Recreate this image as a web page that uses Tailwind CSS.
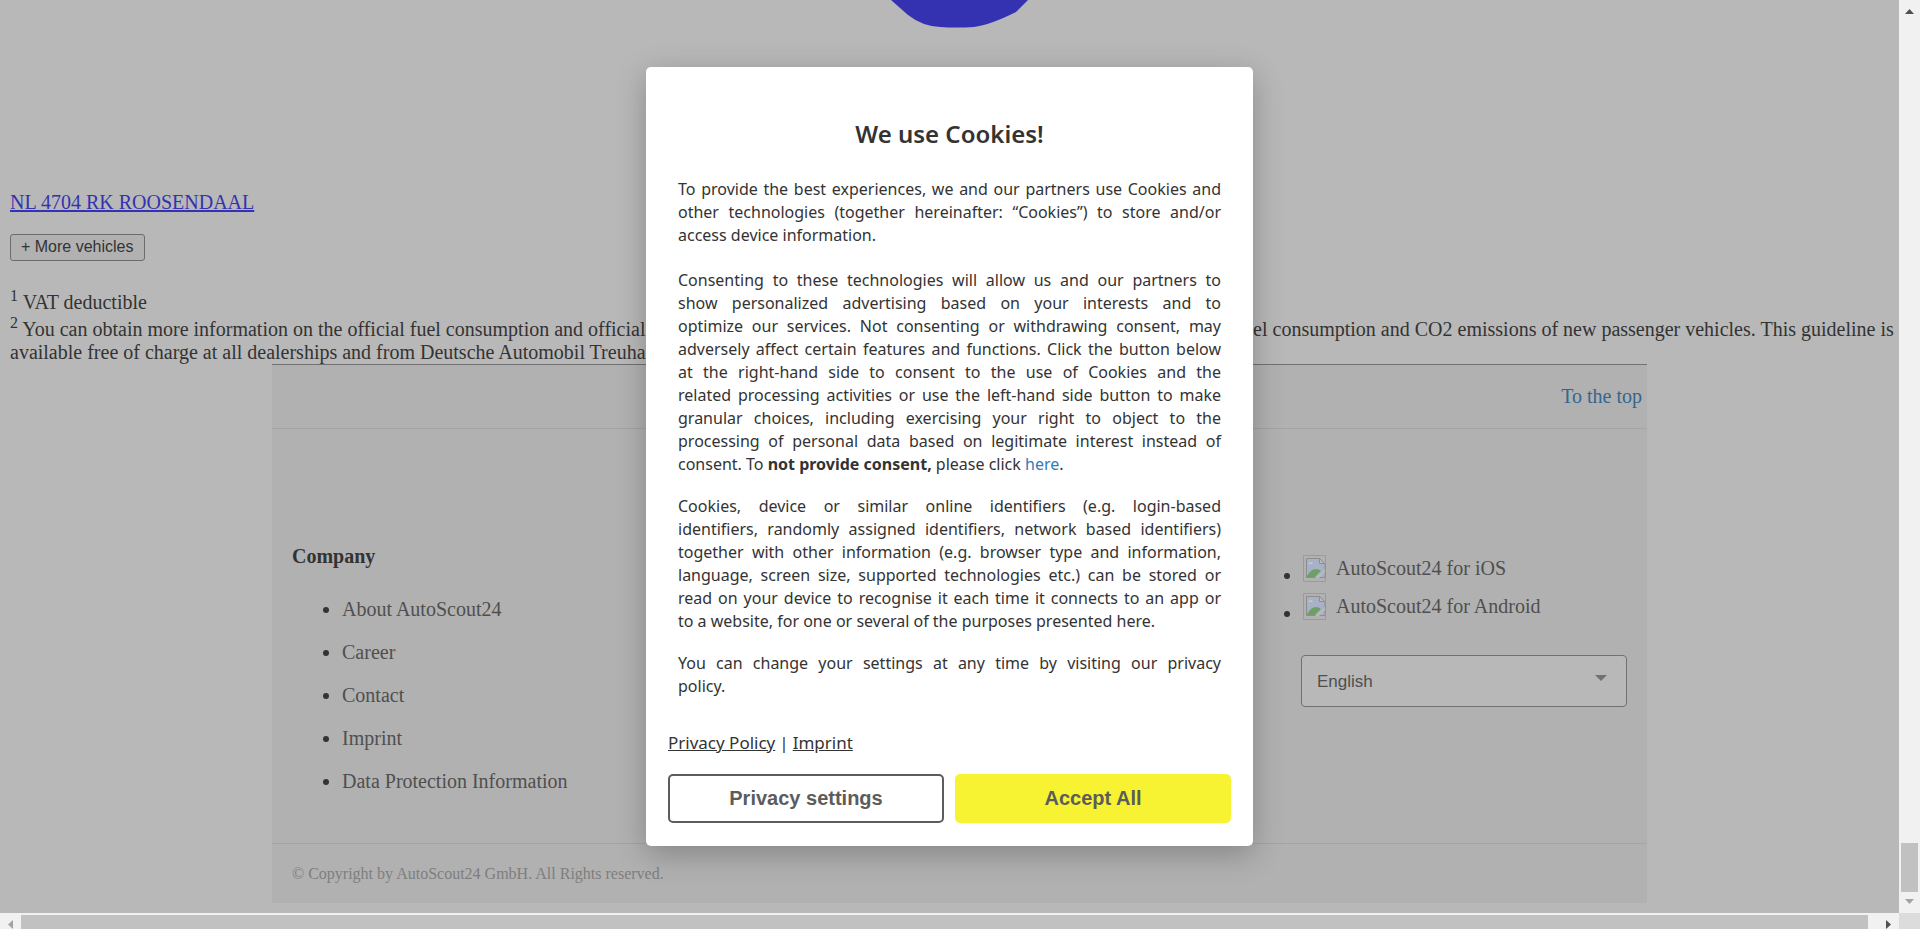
<!DOCTYPE html>
<html lang="en">
<head>
<meta charset="utf-8">
<meta name="viewport" content="width=device-width, initial-scale=1">
<title>AutoScout24</title>
<script src="https://cdn.jsdelivr.net/npm/@tailwindcss/browser@4"></script>
</head>
<body class="grid h-screen grid-cols-[minmax(0,1fr)_21px] grid-rows-[minmax(0,1fr)_16px] overflow-hidden bg-[#b8b8b8] font-['Liberation_Serif',serif] text-[20px] leading-[23px] text-[#333]">

<div class="relative overflow-hidden">
  <main class="pr-1 pl-[10px]">
    <!-- Lower edge of the location marker -->
    <div class="flex h-[191px] justify-center pl-[14px]">
      <svg class="h-[28px] w-[140px]" viewBox="0 0 140 28" fill="#3432b0" aria-hidden="true"><path d="M1 0 L18 15 Q32 26 50 27 Q66 28 84 27 Q100 25 126 12 L138 0Z"/></svg>
    </div>
    <a href="#" class="text-[#3432b0] underline decoration-2">NL 4704 RK ROOSENDAAL</a>
    <div class="mt-5">
      <button type="button" class="block h-[27px] rounded-[3px] border border-[#6c6c6c] bg-[#b1b1b1] px-[10px] pb-[2px] font-['Liberation_Sans',sans-serif] text-[16px] leading-[23px]">+ More vehicles</button>
    </div>
    <div class="mt-[26px]">
      <p class="leading-[31px]"><sup class="text-[16px]">1</sup> VAT deductible</p>
      <p><sup class="text-[16px]">2</sup> You can obtain more information on the official fuel consumption and official specific CO2 emissions of new passenger vehicles from the guideline on fuel consumption and CO2 emissions of new passenger vehicles. This guideline is available free of charge at all dealerships and from Deutsche Automobil Treuhand GmbH at www.dat.de.</p>
    </div>
  </main>

  <div class="pl-5">
  <footer class="mx-auto w-full max-w-[1375px] border-t border-[#717171] bg-[#b1b1b1]">
    <div class="flex h-[64px] items-center justify-end border-b border-[#a4a4a4] pr-[5px]">
      <a href="#" class="text-[#34668f]">To the top</a>
    </div>
    <div class="flex h-[415px] justify-between border-b border-[#a4a4a4] px-5">
      <section class="pt-[116px]">
        <h2 class="font-bold">Company</h2>
        <ul class="mt-[30px] flex list-disc flex-col gap-5 pl-[50px]">
          <li><a href="#" class="text-[#4f4f4f]">About AutoScout24</a></li>
          <li><a href="#" class="text-[#4f4f4f]">Career</a></li>
          <li><a href="#" class="text-[#4f4f4f]">Contact</a></li>
          <li><a href="#" class="text-[#4f4f4f]">Imprint</a></li>
          <li><a href="#" class="text-[#4f4f4f]">Data Protection Information</a></li>
        </ul>
      </section>
      <section class="w-[326px] pt-[125px]">
        <ul class="-ml-[17px] flex flex-col gap-[10px]">
          <li class="flex h-[28px] items-center">
            <span class="mt-4 mr-[13px] size-[6px] rounded-full bg-[#333]"></span>
            <svg class="mr-[10px] h-[27px] w-[23px]" viewBox="0 0 23 27" aria-hidden="true"><path d="M.5.5h22v26H.5z" fill="none" stroke="#9b9b9b"/><path d="M22 8.500v14H3.500v-19h13l5 5" fill="#a7b2c7" stroke="#8d8d8d"/><path d="M16.500 3.500v5h5z" fill="#bbb" stroke="#8d8d8d"/><path d="M5 9q1-2 3-2 2 1 2 2z" fill="#c5c8cd"/><path d="M4 21q4-7 9-7 3 0 5 2l-6 6H4z" fill="#6f9f67"/><path d="M12 23l10-9v3l-6 6z" fill="#b9b9b9"/></svg>
            <a href="#" class="text-[#4f4f4f]">AutoScout24 for iOS</a>
          </li>
          <li class="flex h-[28px] items-center">
            <span class="mt-4 mr-[13px] size-[6px] rounded-full bg-[#333]"></span>
            <svg class="mr-[10px] h-[27px] w-[23px]" viewBox="0 0 23 27" aria-hidden="true"><path d="M.5.5h22v26H.5z" fill="none" stroke="#9b9b9b"/><path d="M22 8.500v14H3.500v-19h13l5 5" fill="#a7b2c7" stroke="#8d8d8d"/><path d="M16.500 3.500v5h5z" fill="#bbb" stroke="#8d8d8d"/><path d="M5 9q1-2 3-2 2 1 2 2z" fill="#c5c8cd"/><path d="M4 21q4-7 9-7 3 0 5 2l-6 6H4z" fill="#6f9f67"/><path d="M12 23l10-9v3l-6 6z" fill="#b9b9b9"/></svg>
            <a href="#" class="text-[#4f4f4f]">AutoScout24 for Android</a>
          </li>
        </ul>
        <div class="relative mt-[35px]">
          <select aria-label="Language" class="h-[52px] w-full appearance-none rounded-[4px] border border-[#717171] bg-[#b8b8b8] px-[15px] font-['Liberation_Sans',sans-serif] text-[17px] text-[#4f4f4f]"><option>English</option></select>
          <svg class="pointer-events-none absolute top-5 right-[20px] h-[6px] w-[12px]" viewBox="0 0 12 6" fill="#717171" aria-hidden="true"><path d="M0 0h12L6 6z"/></svg>
        </div>
      </section>
    </div>
    <p class="h-[59px] px-5 pt-[18px] text-[16px] text-[#7e7e7e]">© Copyright by AutoScout24 GmbH. All Rights reserved.</p>
  </footer>
  </div>

  <div class="absolute inset-0 flex items-center justify-center">
    <div role="dialog" aria-labelledby="cookie-title" class="w-[607px] rounded-[5px] bg-white px-[22px] pt-[48px] pb-[23px] font-['Noto_Sans',sans-serif] shadow-[0_8px_30px_rgba(0,0,0,0.25)]">
      <h1 id="cookie-title" class="text-center text-[24px] leading-[38px] font-semibold">We use Cookies!</h1>
      <!-- Each span is one justified line; the text after the last span closes the paragraph -->
      <div class="px-[10px] pt-[25px] text-[16px] [&_span]:block [&_span]:[text-align-last:justify]">
        <p><span>To provide the best experiences, we and our partners use Cookies and </span><span>other technologies (together hereinafter: “Cookies”) to store and/or </span>access device information.</p>
        <p class="mt-[22px]"><span>Consenting to these technologies will allow us and our partners to </span><span>show personalized advertising based on your interests and to </span><span>optimize our services. Not consenting or withdrawing consent, may </span><span>adversely affect certain features and functions. Click the button below </span><span>at the right-hand side to consent to the use of Cookies and the </span><span>related processing activities or use the left-hand side button to make </span><span>granular choices, including exercising your right to object to the </span><span>processing of personal data based on legitimate interest instead of </span>consent. To <strong class="font-bold">not provide consent,</strong> please click <a href="#" class="text-[#337ab7]">here</a>.</p>
        <p class="mt-[19px]"><span>Cookies, device or similar online identifiers (e.g. login-based </span><span>identifiers, randomly assigned identifiers, network based identifiers) </span><span>together with other information (e.g. browser type and information, </span><span>language, screen size, supported technologies etc.) can be stored or </span><span>read on your device to recognise it each time it connects to an app or </span>to a website, for one or several of the purposes presented here.</p>
        <p class="mt-[19px]"><span>You can change your settings at any time by visiting our privacy </span>policy.</p>
      </div>
      <div class="mt-[33px] flex gap-1 text-[17px]">
        <a href="#" class="underline">Privacy Policy</a><span>|</span><a href="#" class="underline">Imprint</a>
      </div>
      <div class="mt-[20px] grid grid-cols-2 gap-[11px] font-['Liberation_Sans',sans-serif] text-[20px] font-bold text-[#5c5c5c]">
        <button type="button" class="h-[49px] rounded-[5px] border-2 border-[#5c5c5c] bg-white">Privacy settings</button>
        <button type="button" class="h-[49px] rounded-[5px] bg-[#f7f332]">Accept All</button>
      </div>
    </div>
  </div>
</div>

<!-- Vertical scrollbar -->
<div class="flex flex-col items-center bg-[#f1f1f1]">
  <svg class="mt-[9px] h-[5px] w-[9px]" viewBox="0 0 9 5" fill="#505050" aria-hidden="true"><path d="M0 5h9L4.500 0z"/></svg>
  <div class="flex-1"></div>
  <div class="h-[49px] w-[17px] bg-[#c1c1c1]"></div>
  <svg class="mt-[7px] mb-[9px] h-[5px] w-[9px]" viewBox="0 0 9 5" fill="#a3a3a3" aria-hidden="true"><path d="M0 0h9L4.500 5z"/></svg>
</div>

<!-- Horizontal scrollbar -->
<div class="flex items-center bg-[#f1f1f1] pt-[2px]">
  <svg class="mt-1 mr-[8px] ml-[8px] h-[9px] w-[5px]" viewBox="0 0 5 9" fill="#a3a3a3" aria-hidden="true"><path d="M5 0v9L0 4.500z"/></svg>
  <div class="h-full flex-1 bg-[#c1c1c1]"></div>
  <svg class="mt-1 mr-[8px] ml-[18px] h-[9px] w-[5px]" viewBox="0 0 5 9" fill="#505050" aria-hidden="true"><path d="M0 0v9L5 4.500z"/></svg>
</div>
<div class="bg-[#dcdcdc]"></div>
</body>
</html>
